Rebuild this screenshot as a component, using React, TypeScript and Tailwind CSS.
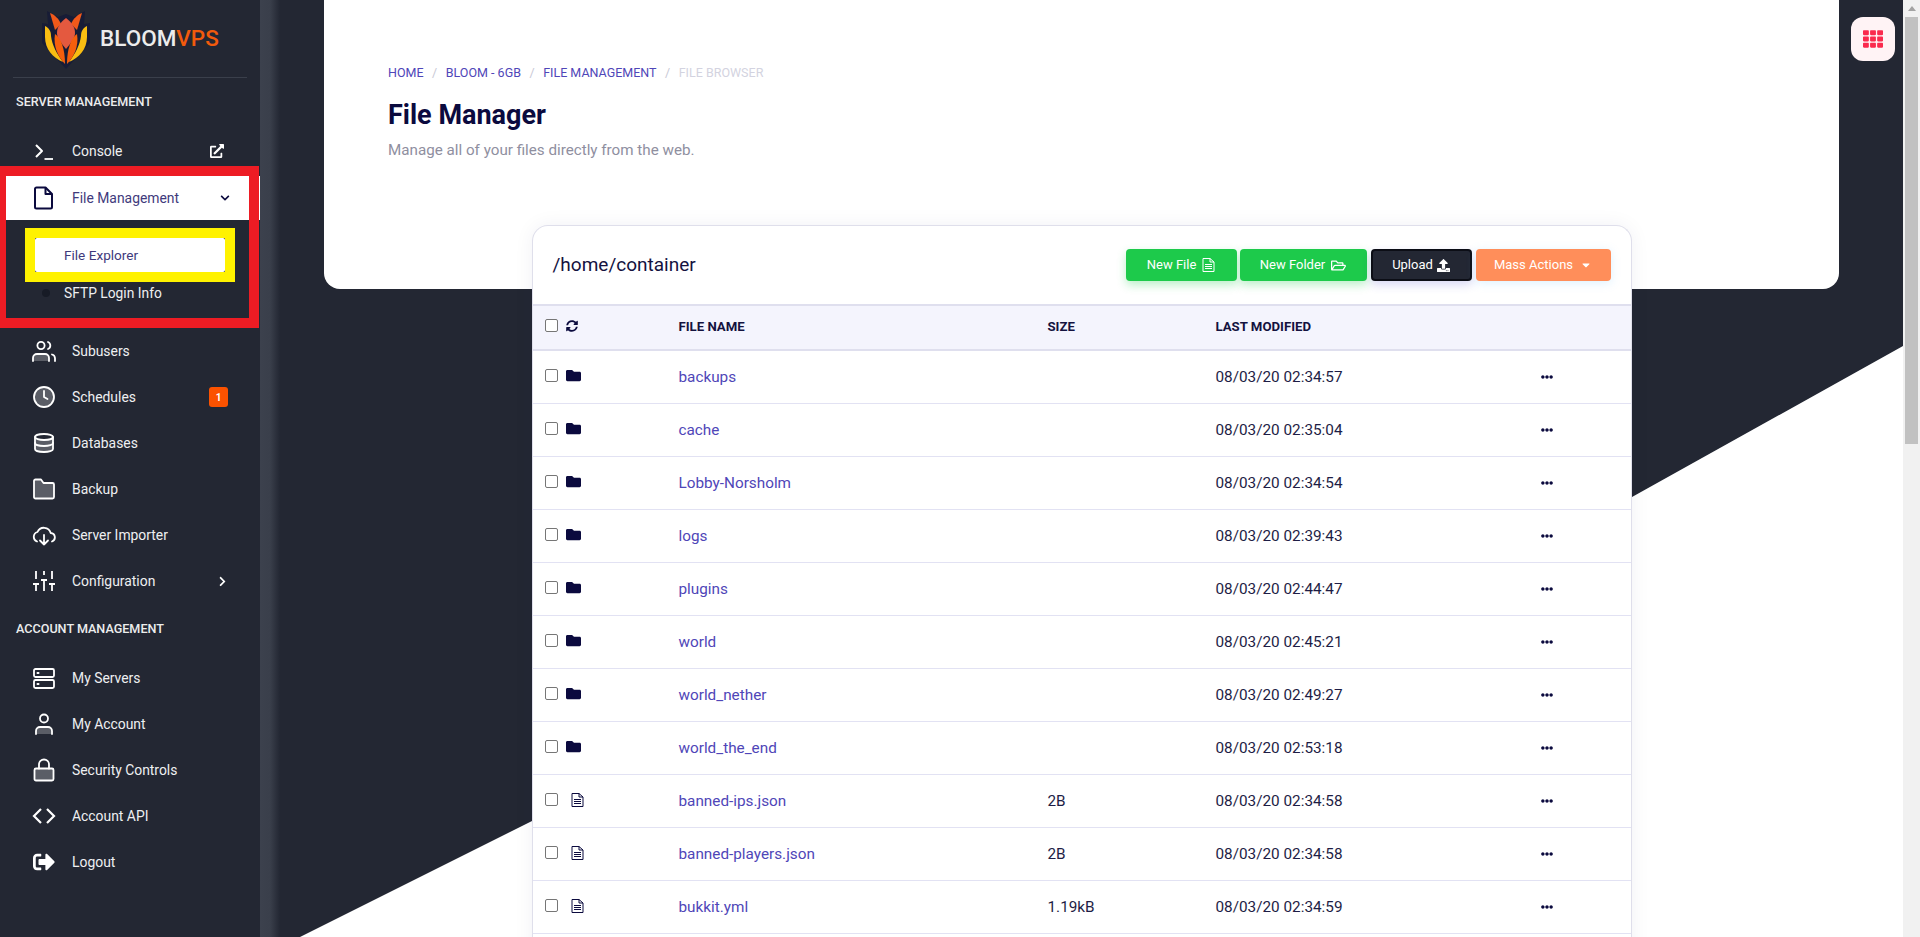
import React from "react";
import {
  FaChevronDown,
  FaChevronRight,
  FaCaretDown,
  FaEllipsisH,
  FaExternalLinkAlt,
  FaFolder,
  FaRegFolderOpen,
  FaSignOutAlt,
  FaSyncAlt,
  FaTh,
  FaUpload,
} from "react-icons/fa";

const duo = "rgba(255,255,255,0.25)";

function Icon({ children }: { children: React.ReactNode }) {
  return (
    <svg width="24" height="24" viewBox="0 0 24 24" fill="none" stroke="currentColor" strokeWidth="1.8" strokeLinecap="round" strokeLinejoin="round">
      {children}
    </svg>
  );
}

const icons: Record<string, React.ReactNode> = {
  console: (
    <Icon>
      <path d="M4 6l6 6-6 6" strokeLinecap="butt" strokeWidth="2" />
      <path d="M12.500 20H21" strokeLinecap="butt" />
    </Icon>
  ),
  users: (
    <Icon>
      <circle cx="9" cy="6.500" r="3.600" />
      <path d="M1 22v-3a4 4 0 0 1 4-4h8a4 4 0 0 1 4 4v3" fill={duo} />
      <path d="M16 3a3.800 3.800 0 0 1 0 7M20 15.500a4 4 0 0 1 3 3.700V22" />
    </Icon>
  ),
  clock: (
    <Icon>
      <circle cx="12" cy="12" r="10" fill={duo} />
      <path d="M12 6v6l3.500 2" />
    </Icon>
  ),
  db: (
    <Icon>
      <path d="M3 6v12c0 1.700 4 3 9 3s9-1.300 9-3V6" fill={duo} />
      <ellipse cx="12" cy="6" rx="9" ry="3" fill="#232733" />
      <path d="M3 12c0 1.700 4 3 9 3s9-1.300 9-3" />
    </Icon>
  ),
  folder: (
    <Icon>
      <path d="M2 4a1.500 1.500 0 0 1 1.500-1.500H9L11.500 6h9A1.500 1.500 0 0 1 22 7.500V20a1.500 1.500 0 0 1-1.500 1.500h-17A1.500 1.500 0 0 1 2 20z" fill={duo} />
    </Icon>
  ),
  cloud: (
    <Icon>
      <path d="M5 18.500A5 5 0 0 1 5.500 9a7 7 0 0 1 13.200 1A4.400 4.400 0 0 1 20 18.500" />
      <path d="M12 12v9.500M8 17.500l4 4 4-4" />
    </Icon>
  ),
  sliders: (
    <Icon>
      <path d="M4 2v8M4 15v7M12 2v4M12 11v11M20 2v8M20 15v7" strokeLinecap="butt" />
      <path d="M1 15h6M9 11h6M17 15h6" strokeLinecap="butt" />
    </Icon>
  ),
  servers: (
    <Icon>
      <rect x="2" y="3" width="20" height="8" rx="1.500" />
      <rect x="2" y="14" width="20" height="8" rx="1.500" />
      <path d="M5.500 7h1M5.500 18h1" strokeWidth="2" />
    </Icon>
  ),
  user: (
    <Icon>
      <circle cx="12" cy="6.500" r="4" />
      <path d="M4 22v-3a4 4 0 0 1 4-4h8a4 4 0 0 1 4 4v3" fill={duo} />
    </Icon>
  ),
  lock: (
    <Icon>
      <rect x="2.500" y="10.500" width="19" height="12" rx="1.500" fill={duo} />
      <path d="M7 10.500V6.500a5 5 0 0 1 10 0v4" />
    </Icon>
  ),
  code: (
    <Icon>
      <path d="M9 5l-7 7 7 7M15 5l7 7-7 7" strokeLinecap="butt" strokeLinejoin="miter" strokeWidth="2.200" />
    </Icon>
  ),
};

function PageIcon({ className }: { className?: string }) {
  return (
    <svg width="13" height="14" viewBox="0 0 13 14" fill="none" stroke="currentColor" className={className}>
      <path d="M1 .500h7l4 3.500v9.500H1z" />
      <path d="M8 .500V4h4M3 6.500h7M3 8.500h7M3 10.500h7" />
    </svg>
  );
}

function NavRow({ icon, label, right }: { icon: React.ReactNode; label: string; right?: React.ReactNode }) {
  return (
    <div className="flex h-[46px] items-center pr-8 pl-8 text-[13.900px] text-[#eeeff1]">
      <span className="flex w-6 justify-center text-white">{icon}</span>
      <span className="ml-4 flex-1">{label}</span>
      {right}
    </div>
  );
}

function Logo() {
  return (
    <div className="flex h-[77px] items-center pl-[42px]">
      <svg width="48" height="60" viewBox="0 0 48 60">
        <path d="M0 14l6 1L5 2l11 6 8-3 8 3 11-6-1 13 6-1v20L24 60 0 34z" fill="#171c36" />
        <path d="M3 17c4 2 6 5 6 10 1 9 6 18 12 26C11 49 3 40 3 28z" fill="#f9bd12" />
        <path d="M45 17c-4 2-6 5-6 10-1 9-6 18-12 26 10-4 18-13 18-25z" fill="#f9bd12" />
        <path d="M8 4c5 2 9 6 11 11l-6 6z" fill="#f2591a" />
        <path d="M40 4c-5 2-9 6-11 11l6 6z" fill="#f2591a" />
        <path d="M24 9c6 5 9 9 9 15 0 5-4 10-9 16-5-6-9-11-9-16 0-6 3-10 9-15z" fill="#e4593f" />
        <path d="M13 25c6 4 10 15 10 30-7-7-12-18-10-30z" fill="#f65f0d" />
        <path d="M35 25c-6 4-10 15-10 30 7-7 12-18 10-30z" fill="#f65f0d" />
      </svg>
      <span className="ml-[10px] text-[22.500px] leading-none font-medium text-[#ececec]">
        BLOOM<span className="text-[#f25a0c]">VPS</span>
      </span>
    </div>
  );
}

function Sidebar() {
  return (
    <aside className="h-full w-[260px] shrink-0 bg-[#232733]">
      <Logo />
      <div className="mx-[13px] h-px bg-[#3a3f4b]" />
      <div className="mt-[14px] pl-4 text-[12.600px] leading-5 font-medium text-[#eceded]">SERVER MANAGEMENT</div>
      <div className="mt-4">
        <NavRow icon={icons.console} label="Console" right={<FaExternalLinkAlt className="mr-1 text-[14px] text-white" />} />
      </div>

      {/* red and yellow marks are drawn on the capture itself */}
      <div className="relative -mt-[8px] h-[162px] w-[259px] border-y-[10px] border-r-[10px] border-l-[6px] border-[#ed1c24]">
        <div className="flex h-[44px] items-center bg-white pr-[19px] pl-[26px] text-[13.900px] text-[#3f3a7c]">
          <span className="flex w-6 justify-center text-[#0b0a3e]">
            <svg width="20" height="24" viewBox="0 0 20 24" fill="none" stroke="currentColor" strokeWidth="2" strokeLinejoin="round">
              <path d="M2.500 1.500h9l6.500 6.500v13a1.500 1.500 0 0 1-1.500 1.500h-14A1.500 1.500 0 0 1 1 21V3a1.500 1.500 0 0 1 1.500-1.500z" />
              <path d="M11.500 1.500V8H18" />
            </svg>
          </span>
          <span className="ml-4 flex-1">File Management</span>
          <FaChevronDown className="text-[10px] text-[#0b0a3e]" />
        </div>
        <div className="mt-2 ml-[19px] h-[54px] w-[210px] border-[10px] border-[#fff200] bg-[#232733]">
          <div className="flex h-full items-center rounded-[2px] bg-white pl-[29px] text-[13.600px] text-[#3f3a7c]">File Explorer</div>
        </div>
        <div className="flex h-[22px] items-center pl-[36px] text-[13.800px] text-[#eeeff1]">
          <span className="h-2 w-2 rounded-full bg-[#171b26]" />
          <span className="ml-[14px]">SFTP Login Info</span>
        </div>
        <span className="absolute top-0 -right-[11px] h-[44px] w-px bg-white" />
      </div>

      <div>
        <NavRow icon={icons.users} label="Subusers" />
        <NavRow
          icon={icons.clock}
          label="Schedules"
          right={<span className="flex h-5 w-[19px] items-center justify-center rounded-[3px] bg-[#fb5200] text-[10px] font-bold text-white">1</span>}
        />
        <NavRow icon={icons.db} label="Databases" />
        <NavRow icon={icons.folder} label="Backup" />
        <NavRow icon={icons.cloud} label="Server Importer" />
        <NavRow icon={icons.sliders} label="Configuration" right={<FaChevronRight className="text-[11px] text-white" />} />
      </div>
      <div className="mt-[15px] pl-4 text-[12.600px] leading-5 font-medium text-[#eceded]">ACCOUNT MANAGEMENT</div>
      <div className="mt-4">
        <NavRow icon={icons.servers} label="My Servers" />
        <NavRow icon={icons.user} label="My Account" />
        <NavRow icon={icons.lock} label="Security Controls" />
        <NavRow icon={icons.code} label="Account API" />
        <NavRow icon={<FaSignOutAlt className="text-[22px]" />} label="Logout" />
      </div>
    </aside>
  );
}

const files = [
  { name: "backups", dir: true, date: "08/03/20 02:34:57" },
  { name: "cache", dir: true, date: "08/03/20 02:35:04" },
  { name: "Lobby-Norsholm", dir: true, date: "08/03/20 02:34:54" },
  { name: "logs", dir: true, date: "08/03/20 02:39:43" },
  { name: "plugins", dir: true, date: "08/03/20 02:44:47" },
  { name: "world", dir: true, date: "08/03/20 02:45:21" },
  { name: "world_nether", dir: true, date: "08/03/20 02:49:27" },
  { name: "world_the_end", dir: true, date: "08/03/20 02:53:18" },
  { name: "banned-ips.json", size: "2B", date: "08/03/20 02:34:58" },
  { name: "banned-players.json", size: "2B", date: "08/03/20 02:34:58" },
  { name: "bukkit.yml", size: "1.19kB", date: "08/03/20 02:34:59" },
];

function Checkbox({ className }: { className?: string }) {
  return <span className={"h-[13px] w-[13px] rounded-[2px] border border-[#767676] bg-white " + className} />;
}

function FileTable() {
  return (
    <div className="relative z-10 mx-auto -mt-[64px] w-[1100px] rounded-t-2xl border border-b-0 border-[#dfdfeb] bg-white shadow-[0_0_20px_rgba(30,30,80,0.06)]">
      <div className="flex h-[78px] items-center pr-5 pl-5">
        <h2 className="flex-1 text-[19px] text-[#14123f]">/home/container</h2>
        <div className="flex gap-[3px] text-[13px] text-white">
          <button className="flex h-8 w-[111px] items-center justify-center gap-[6px] rounded bg-[#1dca4b] shadow-[0_4px_10px_rgba(29,202,75,0.3)]">
            New File <PageIcon />
          </button>
          <button className="flex h-8 w-[127px] items-center justify-center gap-[6px] rounded bg-[#1dca4b] shadow-[0_4px_10px_rgba(29,202,75,0.3)]">
            New Folder <FaRegFolderOpen className="text-[15px]" />
          </button>
          <button className="ml-[1px] flex h-8 w-[101px] items-center justify-center gap-1 rounded border-2 border-[#0c0e16] bg-[#232733] shadow-[0_4px_10px_rgba(60,60,200,0.2)]">
            Upload <FaUpload className="text-[13px]" />
          </button>
          <button className="ml-[1px] flex h-8 w-[135px] items-center justify-center gap-[7px] rounded bg-[#ff8e5a] shadow-[0_2px_10px_rgba(120,200,255,0.25)]">
            Mass Actions <FaCaretDown className="text-[12px]" />
          </button>
        </div>
      </div>
      <div className="grid h-[47px] grid-cols-[146px_369px_168px_1fr] items-center border-y-2 border-[#dfdfee] bg-[#f4f4fd] pb-[2px] text-[13.200px] font-bold text-[#14123f]">
        <div className="flex items-center gap-2 pl-[12px]">
          <Checkbox className="-mt-[3px]" />
          <FaSyncAlt className="-mt-[2px] text-[12px] text-[#0b0a3e]" />
        </div>
        <div>FILE NAME</div>
        <div>SIZE</div>
        <div>LAST MODIFIED</div>
      </div>
      {files.map((f) => (
        <div key={f.name} className="grid h-[53px] grid-cols-[146px_369px_168px_325px_1fr] items-center border-b border-[#e2e2f3] text-[15.300px] text-[#1e1d45]">
          <div className="flex items-center pl-[12px]">
            <Checkbox className="-mt-[3px]" />
            {f.dir ? (
              <FaFolder className="-mt-[3px] ml-2 text-[15px] text-[#0b0a3e]" />
            ) : (
              <PageIcon className="-mt-[3px] ml-[13px] text-[#0b0a3e]" />
            )}
          </div>
          <div className="text-[#4f46b8]">{f.name}</div>
          <div>{f.size}</div>
          <div>{f.date}</div>
          <div>
            <FaEllipsisH className="text-[12px] text-[#0b0a3e]" />
          </div>
        </div>
      ))}
      <div className="h-10" />
    </div>
  );
}

export default function App() {
  return (
    <div className="flex h-[937px] overflow-hidden bg-[#232733] font-['Roboto',sans-serif]">
      <Sidebar />
      <main className="relative h-full min-w-0 flex-1 overflow-hidden bg-[#232733]">
        <div className="absolute inset-y-0 left-0 w-5 bg-gradient-to-r from-[#3c414d] via-[#3a3f4b] to-[#232733]" />
        {/* background shape under the panels, canvas origin is x=260 */}
        <svg className="absolute inset-0" width="1643" height="937" viewBox="0 0 1643 937">
          <polygon points="40,937 272,821 1372,497 1643,346 1643,937" fill="#fff" />
        </svg>
        <div className="relative mx-16 h-[289px] rounded-b-2xl bg-white pt-[64px] pl-16">
          <div className="flex gap-[8.500px] text-[12.500px] text-[#4f46b8]">
            <span>HOME</span>
            <span className="text-[#c9c9d6]">/</span>
            <span>BLOOM - 6GB</span>
            <span className="text-[#c9c9d6]">/</span>
            <span>FILE MANAGEMENT</span>
            <span className="text-[#c9c9d6]">/</span>
            <span className="text-[#d3d3e0]">FILE BROWSER</span>
          </div>
          <h1 className="mt-[16px] text-[27px] leading-8 font-bold text-[#0b0a3e]">File Manager</h1>
          <p className="mt-2 text-[15.200px] text-[#8f8f9f]">Manage all of your files directly from the web.</p>
        </div>
        <FileTable />
        <button className="absolute top-[17px] right-2 flex h-11 w-11 items-center justify-center rounded-xl bg-[#fff3f5] text-[#fa2a4d]">
          <FaTh className="text-[20px]" />
        </button>
      </main>
      <div className="flex h-full w-[17px] shrink-0 flex-col bg-[#f1f1f1]">
        <div className="flex h-[17px] items-center justify-center">
          <span className="h-0 w-0 border-x-[4px] border-b-[5px] border-x-transparent border-b-[#a3a3a3]" />
        </div>
        <div className="mx-[2px] h-[427px] bg-[#c1c1c1]" />
      </div>
    </div>
  );
}
